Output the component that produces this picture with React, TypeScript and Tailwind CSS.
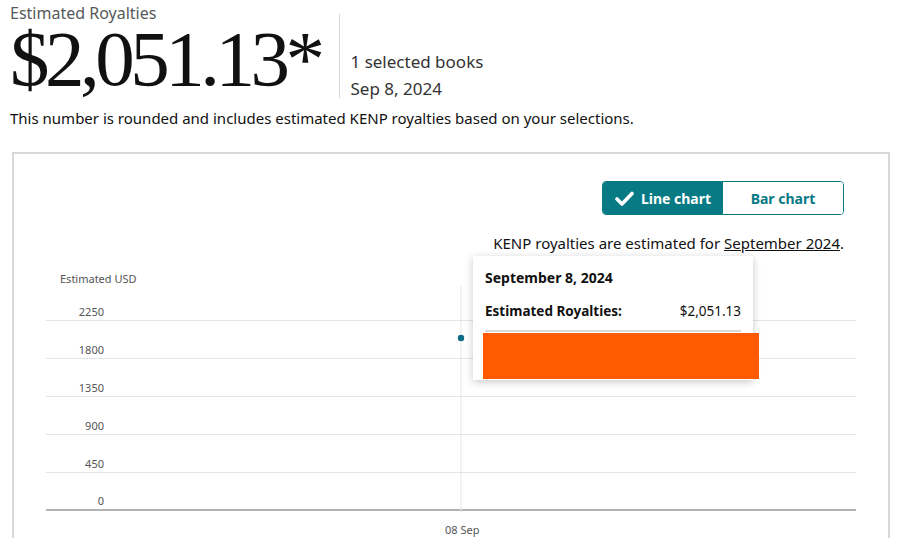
const rows = [
  { label: "2250", h: "h-[35px]" },
  { label: "1800", h: "h-[38px]" },
  { label: "1350", h: "h-[38px]" },
  { label: "900", h: "h-[38px]" },
  { label: "450", h: "h-[38px]" },
];

export default function App() {
  return (
    <div className="w-[900px] h-[538px] overflow-hidden bg-white text-[#111] font-['Noto_Sans',sans-serif]">
      {/* header */}
      <div className="flex items-start pl-[10px] pt-[3px]">
        <div className="flex flex-col">
          <div className="text-[16px] leading-[20px] text-[#565959]">Estimated Royalties</div>
          <div className="font-['Liberation_Serif',serif] text-[79px] leading-[72px] tracking-[-4.5px] text-[#111]">
            $2,051.13*
          </div>
        </div>
        <div className="w-px h-[84px] mt-[11px] ml-[18px] bg-[#d5d9d9]" />
        <div className="flex flex-col ml-[11px] mt-[45px] text-[17px] leading-[27px] text-[#333]">
          <span>1 selected books</span>
          <span>Sep 8, 2024</span>
        </div>
      </div>
      <p className="pl-[10px] mt-[6px] text-[15px] leading-[20px] text-[#111]">
        This number is rounded and includes estimated KENP royalties based on your selections.
      </p>

      {/* card */}
      <div className="relative mt-[24px] ml-[12px] w-[878px] h-[400px] border-2 border-[#d5d9d9]">
        <div className="flex justify-end pt-[27px] pr-[44px]">
          <div className="flex h-[34px] rounded-[4px] border border-[#077a83] overflow-hidden text-[14px] font-bold">
            <div className="w-[120px] flex items-center justify-center gap-[7px] bg-[#077a83] text-white">
              <svg width="19" height="15" viewBox="0 0 19 15">
                <path d="M2 8 L7 13 L17 2.5" fill="none" stroke="white" strokeWidth="3.6" strokeLinecap="round" strokeLinejoin="round" />
              </svg>
              Line chart
            </div>
            <div className="w-[120px] flex items-center justify-center bg-white text-[#077a83]">Bar chart</div>
          </div>
        </div>
        <p className="mt-[18px] pr-[44px] text-right text-[15px] leading-[20px] text-[#111]">
          KENP royalties are estimated for <span className="underline">September 2024</span>.
        </p>

        {/* chart */}
        <div className="mt-[19px] px-[32px]">
          <div className="pl-[14px] text-[11px] leading-[14px] text-[#555]">Estimated USD</div>
          <div className="relative">
            {rows.map((r) => (
              <div key={r.label} className={`flex items-end ${r.h} border-b border-[#e3e6e6]`}>
                <span className="w-[58px] text-right text-[11px] leading-[14px] mb-[1px] text-[#555]">{r.label}</span>
              </div>
            ))}
            <div className="flex items-end h-[38px] border-b-2 border-[#b0b4b4]">
              <span className="w-[58px] text-right text-[11px] leading-[14px] mb-[1px] text-[#555]">0</span>
            </div>
            <svg className="absolute left-0 top-0" width="809" height="226">
              <line x1="415" y1="0" x2="415" y2="226" stroke="#e3e6e6" strokeWidth="1" />
              <circle cx="415" cy="52" r="3.2" fill="#0b6a86" />
            </svg>
          </div>
          <div className="pl-[399px] mt-[12px] text-[11px] leading-[14px] text-[#555]">08 Sep</div>
        </div>

        {/* tooltip */}
        <div className="absolute left-[459px] top-[102px] w-[280px] h-[124px] bg-white shadow-[0_2px_8px_rgba(0,0,0,0.22)] px-[12px] pt-[12px]">
          <div className="text-[14px] leading-[20px] font-bold text-[#111]">September 8, 2024</div>
          <div className="flex justify-between mt-[13px] text-[13.5px] leading-[20px] text-[#111]">
            <span className="font-bold">Estimated Royalties:</span>
            <span>$2,051.13</span>
          </div>
          <div className="mt-[9px] h-[2px] bg-[#d5d9d9]" />
        </div>
        <div className="absolute left-[469px] top-[179px] w-[276px] h-[46px] bg-[#ff5a00]" />
      </div>
    </div>
  );
}
